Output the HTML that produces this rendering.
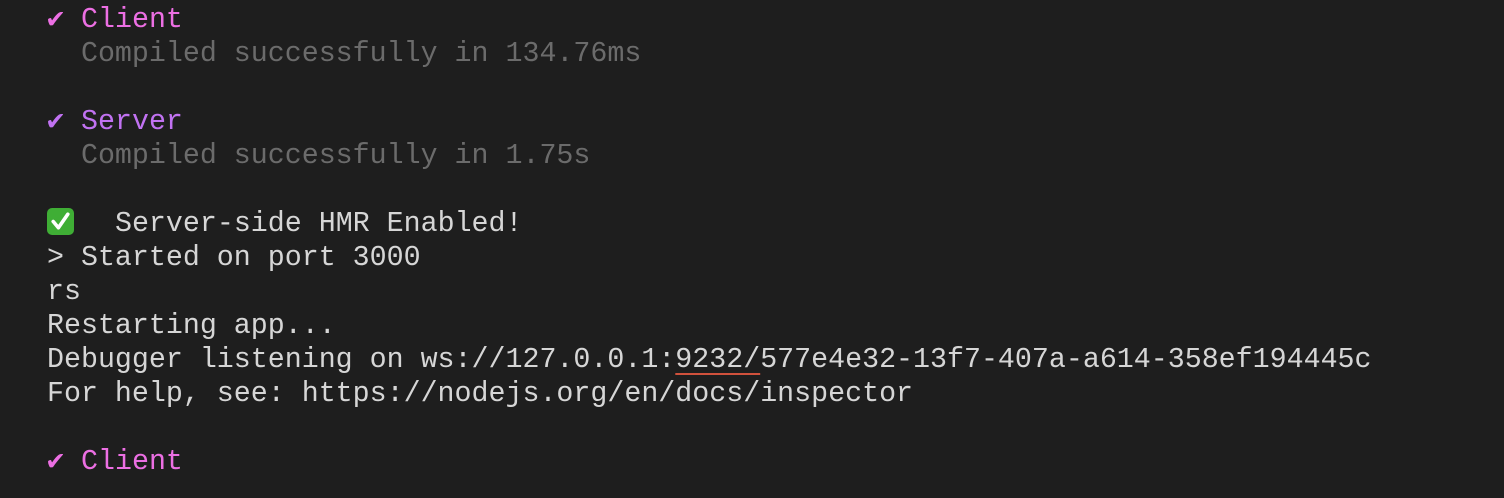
<!DOCTYPE html><html><head><style>
body{margin:0;background:#1e1e1e;width:1504px;height:498px;overflow:hidden}
.t{position:absolute;left:47px;top:3px;font-family:"Liberation Mono",monospace;font-size:28.3px;line-height:34px;color:#d6d6d6;white-space:pre}
.p{color:#ec6fe3}.v{color:#c172f2}.g{color:#6b6b6b}
.e{display:inline-block;width:27px;height:27px;margin-right:7px;background:#3fae35;border-radius:5px;vertical-align:-4px;position:relative}
.u{text-decoration:underline;text-decoration-color:#d0513c;text-underline-offset:6px;text-decoration-thickness:2px}
</style></head><body><div class="t"><span class="p">✔ Client</span>
<span class="g">  Compiled successfully in 134.76ms</span>

<span class="v">✔ Server</span>
<span class="g">  Compiled successfully in 1.75s</span>

<span class="e"><svg width="27" height="27" viewBox="0 0 26 26" style="position:absolute;left:0;top:0"><path d="M6 13 L11 19 L20 6" stroke="#fff" stroke-width="3.5" fill="none" stroke-linecap="round" stroke-linejoin="round"/></svg></span>  Server-side HMR Enabled!
&gt; Started on port 3000
rs
Restarting app...
Debugger listening on ws://127.0.0.1:<span class="u">9232/</span>577e4e32-13f7-407a-a614-358ef194445c
For help, see: https://nodejs.org/en/docs/inspector

<span class="p">✔ Client</span></div></body></html>
